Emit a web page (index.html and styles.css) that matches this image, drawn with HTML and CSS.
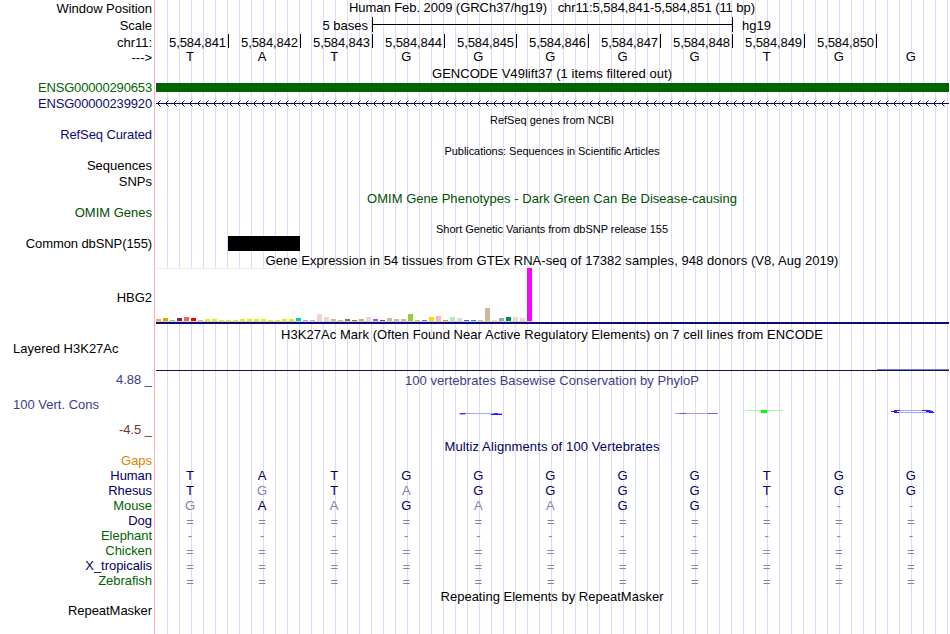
FILE: index.html
```html
<!DOCTYPE html>
<html lang="en">
<head>
  <meta charset="UTF-8" />
  <title>Human chr11:5,584,841-5,584,851</title>
  <link rel="stylesheet" href="styles.css">
</head>
<body>
  <div class="browser">
    <!-- Position and ruler -->
    <div class="row head"><div class="label">Window Position</div><div class="track title position"><span style="--w:406">Human Feb. 2009 (GRCh37/hg19) &nbsp; chr11:5,584,841-5,584,851 (11 bp)</span></div></div>
    <div class="row head">
      <div class="label">Scale</div>
      <div class="track scale"><span class="bases">5 bases</span><span class="scale-bar"></span><span>hg19</span></div>
    </div>
    <div class="row ruler-row"><div class="label">chr11:</div><div class="track ruler" id="ruler"></div></div>
    <div class="row thin reference"><div class="label">---&gt;</div><div class="track seq" data-seq="TATGGGGGTGG"></div></div>

    <!-- Genes -->
    <div class="row thin"><div class="track title"><span style="--w:240">GENCODE V49lift37 (1 items filtered out)</span></div></div>
    <div class="row"><div class="label green gene">ENSG00000290653</div><div class="track"><div class="exon"></div></div></div>
    <div class="row">
      <div class="label blue gene">ENSG00000239920</div>
      <div class="track">
        <svg width="793" height="16">
          <defs>
            <pattern id="chevron" width="8" height="16" patternUnits="userSpaceOnUse">
              <path d="M4.5 4.5L1.5 7.5L4.5 10.5" fill="none" stroke="#0c0c78" />
            </pattern>
          </defs>
          <rect width="793" height="16" fill="url(#chevron)" />
          <rect y="7" width="793" height="1" fill="#0c0c78" />
        </svg>
      </div>
    </div>
    <div class="row thin"><div class="track title small"><span style="--w:124">RefSeq genes from NCBI</span></div></div>
    <div class="row"><div class="label blue up">RefSeq Curated</div></div>
    <div class="row thin"><div class="track title small"><span style="--w:215">Publications: Sequences in Scientific Articles</span></div></div>
    <div class="row"><div class="label up wide">Sequences</div></div>
    <div class="row"><div class="label up wide">SNPs</div></div>
    <div class="row thin"><div class="track title omim"><span style="--w:370">OMIM Gene Phenotypes - Dark Green Can Be Disease-causing</span></div></div>
    <div class="row"><div class="label omim up wide">OMIM Genes</div></div>
    <div class="row thin"><div class="track title small"><span style="--w:232">Short Genetic Variants from dbSNP release 155</span></div></div>
    <div class="row"><div class="label up">Common dbSNP(155)</div><div class="track"><div class="snp"></div></div></div>

    <!-- Expression -->
    <div class="row thin"><div class="track title"><span style="--w:573">Gene Expression in 54 tissues from GTEx RNA-seq of 17382 samples, 948 donors (V8, Aug 2019)</span></div></div>
    <div class="row gtex"><div class="label">HBG2</div><div class="track"><div class="bars" id="bars"></div></div></div>

    <!-- Regulation -->
    <div class="row thin"><div class="track title"><span style="--w:542">H3K27Ac Mark (Often Found Near Active Regulatory Elements) on 7 cell lines from ENCODE</span></div></div>
    <div class="row h3k"><div class="label left">Layered H3K27Ac</div><div class="track"><div class="signal"></div></div></div>

    <!-- Conservation -->
    <div class="row thin"><div class="label cons">4.88 _</div><div class="track title cons"><span style="--w:294">100 vertebrates Basewise Conservation by PhyloP</span></div></div>
    <div class="row phylop">
      <div class="label cons">
        <div class="left">100 Vert. Cons</div>
        <div class="low">-4.5 _</div>
      </div>
      <div class="track">
        <svg width="793" height="51" fill="none">
          <path d="M303 26.5H346" stroke="#a8a8ff" />
          <path d="M304 26.5H310M338 26.5H342" stroke="#4040ff" />
          <path d="M304 27.5H309" stroke="#a0a0ff" />
          <path d="M335 27.5H346" stroke="#1010ff" />
          <path d="M519 26.5H562" stroke="#a0a0f0" />
          <path d="M524 26.5H530M552 26.5H562" stroke="#6060e0" />
          <path d="M589 23.5H627" stroke="#a0ffa0" />
          <path d="M605 24.5H611" stroke="#00ff00" stroke-width="3" />
          <path d="M740 23.5H776M741 25.5H778" stroke="#a0a0ff" />
          <path d="M735 24.5H741M738 23.5H744M766 23.5H774M738 25.5H743M773 25.5H778M770 24.5H777" stroke="#2020ff" />
        </svg>
      </div>
    </div>
    <div class="row thin"><div class="track title navy"><span style="--w:215">Multiz Alignments of 100 Vertebrates</span></div></div>
    <div class="row thin"><div class="label gaps">Gaps</div></div>
    <div class="row thin navy"><div class="label">Human</div><div class="track seq" data-seq="TATGGGGGTGG"></div></div>
    <div class="row thin navy"><div class="label">Rhesus</div><div class="track seq" data-seq="TgTaGGGGTGG"></div></div>
    <div class="row thin navy"><div class="label dark-green">Mouse</div><div class="track seq" data-seq="gAaGaaGG---"></div></div>
    <div class="row thin navy"><div class="label">Dog</div><div class="track seq unaligned" data-seq="==========="></div></div>
    <div class="row thin navy"><div class="label dark-green">Elephant</div><div class="track seq" data-seq="-----------"></div></div>
    <div class="row thin navy"><div class="label dark-green">Chicken</div><div class="track seq unaligned" data-seq="==========="></div></div>
    <div class="row thin navy"><div class="label">X_tropicalis</div><div class="track seq unaligned" data-seq="==========="></div></div>
    <div class="row thin navy"><div class="label dark-green">Zebrafish</div><div class="track seq unaligned" data-seq="==========="></div></div>
    <div class="row thin"><div class="track title"><span style="--w:223">Repeating Elements by RepeatMasker</span></div></div>
    <div class="row thin"><div class="label">RepeatMasker</div></div>
  </div>
  <script src="script.js"></script>
</body>
</html>
```
FILE: styles.css
```css
body {
  margin: 0;
  background: #fff;
  color: #000;
  font: 13px "Liberation Sans", Arial, sans-serif;
}

/* vertical guide lines every 12px, red line beside the labels */
.browser {
  width: 949px;
  height: 634px;
  overflow: hidden;
  background:
    linear-gradient(#ffb4b4, #ffb4b4) 154px 0 / 1px 100% no-repeat,
    linear-gradient(#fff, #fff) 0 0 / 156px 100% no-repeat,
    repeating-linear-gradient(to right, transparent 0 11px, #dcdcfa 11px 12px);
}

.row {
  display: flex;
  height: 16px;
  line-height: 16px;
  white-space: nowrap;
}

.head {
  height: 17px;
  line-height: 17px;
}

.thin {
  height: 15px;
  line-height: 15px;
}

.ruler-row {
  line-height: 18px;
}

.label {
  width: 152px;
  text-align: right;
  letter-spacing: -0.04px;
}

.gene {
  letter-spacing: -0.15px;
}

.up {
  line-height: 15px;
  letter-spacing: -0.1px;
}

.wide {
  letter-spacing: 0;
}

.left {
  padding-left: 13px;
  box-sizing: border-box;
  text-align: left;
  letter-spacing: 0;
}

.track {
  width: 793px;
  margin-left: auto;
}

.track svg {
  display: block;
}

.title {
  box-sizing: border-box;
  padding-right: 1px;
  text-align: center;
  line-height: 17px;
}

.position {
  line-height: 15px;
}

.small {
  font-size: 11px;
  line-height: 16px;
}

.green { color: #006400; }
.blue { color: #0c0c78; }
.omim { color: #005000; }
.navy { color: #000064; }
.dark-green { color: #006400; }
.cons { color: #3c3c8c; }
.gaps { color: #e68200; }

/* scale and ruler */
.scale {
  display: flex;
}

.bases {
  width: 212px;
  margin-right: 4px;
  text-align: right;
}

.scale-bar {
  width: 359px;
  height: 15px;
  margin-right: 9px;
  border: solid #000;
  border-width: 0 1px;
  background: linear-gradient(#000, #000) 0 7px / 100% 1px no-repeat;
}

.ruler {
  display: flex;
}

.ruler span {
  box-sizing: border-box;
  width: 72px;
  height: 14px;
  padding-right: 2px;
  border-right: 1px solid #000;
  text-align: right;
  letter-spacing: -0.1px;
}

.ruler span:first-child {
  width: 73px;
}

.seq {
  display: flex;
}

.seq span {
  width: 72.09px;
  margin-left: -2px;
  margin-right: 2px;
  text-align: center;
}

.reference .seq {
  line-height: 14px;
}

.unaligned {
  line-height: 17px;
}

.seq .faded {
  color: #8080b4;
}

/* items */
.exon {
  height: 9px;
  margin-top: 3px;
  background: #006400;
}

.snp {
  width: 72px;
  height: 15px;
  margin-left: 72px;
  background: #000;
}

.gtex {
  height: 59px;
  line-height: 61px;
}

.gtex .track {
  height: 56px;
  margin-top: 1px;
  box-sizing: border-box;
  border-bottom: 2px solid #0c0c78;
}

.bars {
  display: flex;
  align-items: flex-end;
  gap: 2px;
  box-sizing: border-box;
  width: 377px;
  height: 54px;
  border-bottom: 1px solid #d2d2d2;
  background: linear-gradient(#eee, #eee) 0 0 / 100% 1px no-repeat, #fff;
}

.bars span {
  flex: none;
  width: 5px;
}

.h3k {
  height: 31px;
}

.signal {
  height: 29px;
  border-bottom: 1px solid #14145a;
  background: linear-gradient(#7878d2, #7878d2) 100% 100% / 72px 1px no-repeat;
}

.phylop {
  height: 51px;
}

.phylop .left {
  padding-top: 10px;
}

.low {
  padding-top: 9px;
  color: #783232;
}
```
FILE: script.js
```js
// ruler positions
const ruler = document.getElementById('ruler');
for (let pos = 841; pos <= 850; pos++) {
  const tick = document.createElement('span');
  tick.textContent = '5,584,' + pos;
  ruler.appendChild(tick);
}

// one cell per base, lower case means mismatch
document.querySelectorAll('.seq').forEach(track => {
  for (const base of track.dataset.seq) {
    const cell = document.createElement('span');
    cell.textContent = base.toUpperCase();
    if (/[a-z=-]/.test(base)) cell.className = 'faded';
    track.appendChild(cell);
  }
});

// GTEx tissues: height, color
const tissues = [
  [2, '#ffa54f'], [3, '#ee9a00'], [1, '#8fbc8f'], [3, '#8b1c62'], [4, '#ee6a50'], [3, '#ff0000'],
  [1, '#cdb79e'], [2, '#eeee00'], [2, '#eeee00'], [1, '#eeee00'], [1, '#eeee00'], [1, '#eeee00'],
  [2, '#eeee00'], [2, '#eeee00'], [2, '#eeee00'], [2, '#eeee00'], [1, '#eeee00'], [1, '#eeee00'],
  [2, '#eeee00'], [2, '#eeee00'], [3, '#00cdcd'], [1, '#ee82ee'], [1, '#9ac0cd'], [7, '#eed5d2'],
  [4, '#eed5d2'], [2, '#cdb79e'], [1, '#cdb79e'], [2, '#8b7355'], [1, '#8b7355'], [2, '#cdaa7d'],
  [4, '#eed5d2'], [2, '#b452cd'], [1, '#7a378b'], [3, '#cdb79e'], [2, '#cdb79e'], [2, '#cdb79e'],
  [7, '#9acd32'], [1, '#cdb79e'], [1, '#7a67ee'], [4, '#ffd700'], [5, '#ffb6c1'], [1, '#cd9b1d'],
  [4, '#b4eeb4'], [3, '#d9d9d9'], [1, '#3a5fcd'], [1, '#1e90ff'], [1, '#cdb79e'], [13, '#cdb79e'],
  [1, '#ffd39b'], [3, '#a6a6a6'], [4, '#008b45'], [4, '#eed5d2'], [3, '#eed5d2'], [53, '#ff00ff']
];
const bars = document.getElementById('bars');
tissues.forEach(([height, color]) => {
  const bar = document.createElement('span');
  bar.style.height = height + 'px';
  bar.style.background = color;
  bars.appendChild(bar);
});

// spread each title over its drawn width
document.querySelectorAll('.title span').forEach(span => {
  const width = Number(span.style.getPropertyValue('--w'));
  const extra = (width - span.getBoundingClientRect().width) / span.textContent.length;
  span.style.letterSpacing = extra + 'px';
});
```
